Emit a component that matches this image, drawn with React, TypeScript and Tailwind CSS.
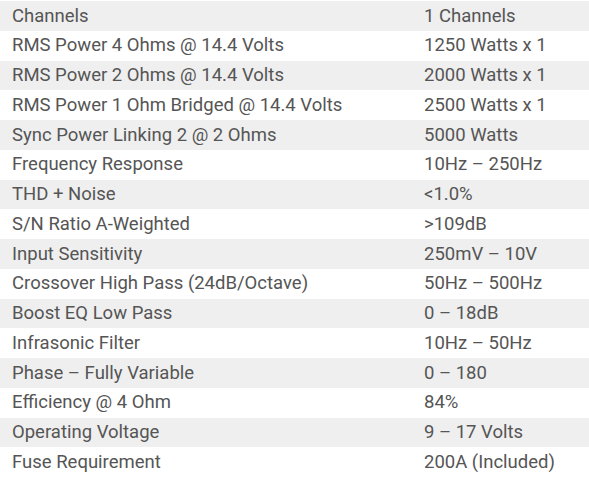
const specs: [string, string][] = [
  ["Channels", "1 Channels"],
  ["RMS Power 4 Ohms @ 14.4 Volts", "1250 Watts x 1"],
  ["RMS Power 2 Ohms @ 14.4 Volts", "2000 Watts x 1"],
  ["RMS Power 1 Ohm Bridged @ 14.4 Volts", "2500 Watts x 1"],
  ["Sync Power Linking 2 @ 2 Ohms", "5000 Watts"],
  ["Frequency Response", "10Hz – 250Hz"],
  ["THD + Noise", "<1.0%"],
  ["S/N Ratio A-Weighted", ">109dB"],
  ["Input Sensitivity", "250mV – 10V"],
  ["Crossover High Pass (24dB/Octave)", "50Hz – 500Hz"],
  ["Boost EQ Low Pass", "0 – 18dB"],
  ["Infrasonic Filter", "10Hz – 50Hz"],
  ["Phase – Fully Variable", "0 – 180"],
  ["Efficiency @ 4 Ohm", "84%"],
  ["Operating Voltage", "9 – 17 Volts"],
  ["Fuse Requirement", "200A (Included)"],
];

export default function App() {
  return (
    <div className="w-[589px] h-[478px] bg-white pt-px font-['Roboto',sans-serif] text-[18.5px] text-[#555555]">
      <table className="w-full border-collapse">
        <tbody>
          {specs.map(([label, value], i) => (
            <tr key={label} className={i % 2 === 0 ? "bg-[#efefef]" : "bg-white"}>
              <td className="h-[29.75px] w-[424px] pl-3 p-0 leading-none">{label}</td>
              <td className="h-[29.75px] p-0 leading-none">{value}</td>
            </tr>
          ))}
        </tbody>
      </table>
    </div>
  );
}
